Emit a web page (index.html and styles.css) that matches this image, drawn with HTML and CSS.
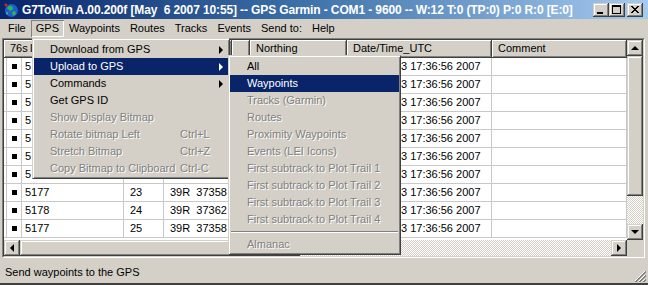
FILE: index.html
```html
<!DOCTYPE html>
<html lang="en">
<head>
    <meta charset="UTF-8">
    <title>G7ToWin</title>
    <link rel="stylesheet" href="styles.css">
</head>
<body>
    <div class="window">
        <div class="titlebar">
            <svg class="app-icon" width="16" height="16" viewBox="0 0 16 16">
                <circle cx="8.5" cy="8.5" r="6.5" fill="#1d5fd0"/>
                <path d="M4 6 Q6 3 9 4 L10 7 L8 9 L6 8 Z" fill="#2fb84a"/>
                <path d="M9 10 L12 9 L13 12 L10 14 Z" fill="#2fb84a"/>
                <path d="M3 10 L5 11 L4 13 Z" fill="#6fd06a"/>
                <circle cx="3" cy="3" r="1.5" fill="#e02020"/>
            </svg>
            <span class="title-text">G7ToWin A.00.200f [May&nbsp; 6 2007 10:55] -- GPS Garmin - COM1 - 9600 -- W:12 T:0 (TP:0) P:0 R:0 [E:0]</span>
            <div class="title-buttons">
                <span class="tbtn">
                    <svg width="16" height="14" viewBox="0 0 16 14"><rect x="4" y="9" width="6" height="2" fill="#000"/></svg>
                </span>
                <span class="tbtn">
                    <svg width="16" height="14" viewBox="0 0 16 14"><rect x="3.5" y="2.5" width="8" height="8" fill="none" stroke="#000"/><rect x="3" y="2" width="9" height="2" fill="#000"/></svg>
                </span>
                <span class="tbtn close">
                    <svg width="16" height="14" viewBox="0 0 16 14"><path d="M4 3 L11 10 M5 3 L12 10 M11 3 L4 10 M12 3 L5 10" stroke="#000" stroke-width="1"/></svg>
                </span>
            </div>
        </div>

        <div class="menubar">
            <span class="mitem">File</span>
            <span class="mitem open">GPS</span>
            <span class="mitem">Waypoints</span>
            <span class="mitem">Routes</span>
            <span class="mitem">Tracks</span>
            <span class="mitem">Events</span>
            <span class="mitem">Send to:</span>
            <span class="mitem">Help</span>
        </div>

        <div class="listview">
            <div class="lv-inner">
                <div class="lv-top">
                    <div class="lv-grid">
                        <div class="lv-head">
                            <span class="hcell first">76s I</span>
                            <span class="hcell"></span>
                            <span class="hcell"></span>
                            <span class="hcell"></span>
                            <span class="hcell">Northing</span>
                            <span class="hcell">Date/Time_UTC</span>
                            <span class="hcell">Comment</span>
                        </div>
                        <div class="lv-row"><span class="cell name"><i class="chk"></i>5</span><span class="cell"></span><span class="cell"></span><span class="cell"></span><span class="cell"></span><span class="cell date">3 17:36:56 2007</span><span class="cell"></span></div>
                        <div class="lv-row"><span class="cell name"><i class="chk"></i>5</span><span class="cell"></span><span class="cell"></span><span class="cell"></span><span class="cell"></span><span class="cell date">3 17:36:56 2007</span><span class="cell"></span></div>
                        <div class="lv-row"><span class="cell name"><i class="chk"></i>5</span><span class="cell"></span><span class="cell"></span><span class="cell"></span><span class="cell"></span><span class="cell date">3 17:36:56 2007</span><span class="cell"></span></div>
                        <div class="lv-row"><span class="cell name"><i class="chk"></i>5</span><span class="cell"></span><span class="cell"></span><span class="cell"></span><span class="cell"></span><span class="cell date">3 17:36:56 2007</span><span class="cell"></span></div>
                        <div class="lv-row"><span class="cell name"><i class="chk"></i>5</span><span class="cell"></span><span class="cell"></span><span class="cell"></span><span class="cell"></span><span class="cell date">3 17:36:56 2007</span><span class="cell"></span></div>
                        <div class="lv-row"><span class="cell name"><i class="chk"></i>5</span><span class="cell"></span><span class="cell"></span><span class="cell"></span><span class="cell"></span><span class="cell date">3 17:36:56 2007</span><span class="cell"></span></div>
                        <div class="lv-row"><span class="cell name"><i class="chk"></i>5</span><span class="cell"></span><span class="cell"></span><span class="cell"></span><span class="cell"></span><span class="cell date">3 17:36:56 2007</span><span class="cell"></span></div>
                        <div class="lv-row"><span class="cell name"><i class="chk"></i>5177</span><span class="cell">23</span><span class="cell utm">39R  37358</span><span class="cell"></span><span class="cell"></span><span class="cell date">3 17:36:56 2007</span><span class="cell"></span></div>
                        <div class="lv-row"><span class="cell name"><i class="chk"></i>5178</span><span class="cell">24</span><span class="cell utm">39R  37362</span><span class="cell"></span><span class="cell"></span><span class="cell date">3 17:36:56 2007</span><span class="cell"></span></div>
                        <div class="lv-row"><span class="cell name"><i class="chk"></i>5177</span><span class="cell">25</span><span class="cell utm">39R  37358</span><span class="cell"></span><span class="cell"></span><span class="cell date">3 17:36:56 2007</span><span class="cell"></span></div>
                    </div>
                    <div class="vscroll">
                        <span class="sbtn"><i class="arrow up"></i></span>
                        <span class="vthumb"></span>
                        <span class="track"></span>
                        <span class="sbtn"><i class="arrow down"></i></span>
                    </div>
                </div>
                <div class="hscroll">
                    <span class="sbtn"><i class="arrow left"></i></span>
                    <span class="hthumb"></span>
                    <span class="track"></span>
                    <span class="sbtn"><i class="arrow right"></i></span>
                    <span class="corner"></span>
                </div>
            </div>
        </div>

        <div class="statusbar">
            <span>Send waypoints to the GPS</span>
            <svg class="grip" width="12" height="12" viewBox="0 0 12 12">
                <path d="M11 1 L1 11 M11 5 L5 11 M11 9 L9 11" stroke="#fff"/>
                <path d="M12 1 L1 12 M12 2 L2 12 M12 5 L5 12 M12 6 L6 12 M12 9 L9 12 M12 10 L10 12" stroke="#808080"/>
            </svg>
        </div>

        <!-- GPS drop-down -->
        <div class="menu menu-gps">
            <div class="mi"><span class="ml">Download from GPS</span><i class="sub"></i></div>
            <div class="mi active"><span class="ml">Upload to GPS</span><i class="sub"></i></div>
            <div class="mi"><span class="ml">Commands</span><i class="sub"></i></div>
            <div class="mi"><span class="ml">Get GPS ID</span></div>
            <div class="mi disabled"><span class="ml">Show Display Bitmap</span></div>
            <div class="mi disabled"><span class="ml">Rotate bitmap Left</span><span class="key">Ctrl+L</span></div>
            <div class="mi disabled"><span class="ml">Stretch Bitmap</span><span class="key">Ctrl+Z</span></div>
            <div class="mi disabled"><span class="ml">Copy Bitmap to Clipboard</span><span class="key">Ctrl-C</span></div>
        </div>

        <!-- Upload to GPS submenu -->
        <div class="menu menu-upload">
            <div class="mi">All</div>
            <div class="mi active">Waypoints</div>
            <div class="mi disabled">Tracks (Garmin)</div>
            <div class="mi disabled">Routes</div>
            <div class="mi disabled">Proximity Waypoints</div>
            <div class="mi disabled">Events (LEI Icons)</div>
            <div class="mi disabled">First subtrack to Plot Trail 1</div>
            <div class="mi disabled">First subtrack to Plot Trail 2</div>
            <div class="mi disabled">First subtrack to Plot Trail 3</div>
            <div class="mi disabled">First subtrack to Plot Trail 4</div>
            <div class="sep"></div>
            <div class="mi disabled">Almanac</div>
        </div>
    </div>
</body>
</html>
```

FILE: styles.css
```css
body {
    margin: 0;
    font-family: "Liberation Sans", Arial, sans-serif;
    font-size: 11px;
    color: #000;
    background-color: #d4d0c8;
}

.window {
    position: relative;
    width: 648px;
    height: 285px;
    box-sizing: border-box;
    background-color: #d4d0c8;
    border-bottom: 2px solid #404040;
    overflow: hidden;
}

/* title bar */
.titlebar {
    height: 19px;
    display: flex;
    align-items: center;
    padding: 0 5px 0 3px;
    background: linear-gradient(90deg, #0a246a, #3a6ea5 45%, #a6caf0);
}

.app-icon {
    flex: none;
    margin-right: 3px;
}

.title-text {
    color: #fff;
    font-weight: bold;
    font-size: 12px;
    letter-spacing: -0.12px;
    white-space: nowrap;
}

.title-buttons {
    margin-left: auto;
    display: flex;
}

.tbtn {
    width: 16px;
    height: 14px;
    background-color: #d4d0c8;
    box-shadow: inset -1px -1px #404040, inset 1px 1px #d4d0c8, inset -2px -2px #808080, inset 2px 2px #fff;
}

.tbtn svg {
    display: block;
}

.tbtn.close {
    margin-left: 2px;
}

/* menu bar */
.menubar {
    height: 19px;
    display: flex;
    align-items: center;
    padding-left: 3px;
}

.mitem {
    padding: 0 5px;
    height: 17px;
    line-height: 17px;
}

.mitem.open {
    box-shadow: inset 1px 1px #808080, inset -1px -1px #fff;
}

/* list view */
.listview {
    margin: 0 3px 0 2px;
    border: 1px solid;
    border-color: #808080 #fff #fff #808080;
}

.lv-inner {
    border: 1px solid;
    border-color: #404040 #d4d0c8 #d4d0c8 #404040;
}

.lv-top {
    display: flex;
    height: 200px;
}

.lv-grid {
    width: 623px;
    background-color: #fff;
    overflow: hidden;
}

.lv-head,
.lv-row {
    display: grid;
    grid-template-columns: 120px 40px 68px 18px 97px 145px 135px;
    height: 18px;
}

.hcell {
    box-sizing: border-box;
    height: 18px;
    line-height: 17px;
    padding-left: 6px;
    background-color: #d4d0c8;
    border-right: 1px solid #404040;
    border-bottom: 1px solid #404040;
    box-shadow: inset 1px 1px #fff, inset -1px -1px #808080;
    white-space: nowrap;
    overflow: hidden;
}

.hcell.first {
    word-spacing: -1px;
}

.cell {
    box-sizing: border-box;
    height: 18px;
    line-height: 17px;
    padding-left: 6px;
    border-right: 1px solid #c8c8c8;
    border-bottom: 1px solid #c8c8c8;
    white-space: nowrap;
    overflow: hidden;
}

.cell.name {
    display: flex;
    padding-left: 2px;
}

.cell.utm {
    white-space: pre;
}

/* date text starts where the submenu ends */
.cell.date {
    padding-left: 54px;
}

.chk {
    width: 14px;
    margin-right: 3px;
    border-left: 1px solid #c8c8c8;
    border-right: 1px solid #c8c8c8;
    display: flex;
    align-items: center;
    justify-content: center;
}

.chk::after {
    content: "";
    width: 5px;
    height: 5px;
    background-color: #000;
}

/* scroll bars */
.sbtn {
    flex: none;
    width: 16px;
    height: 16px;
    display: flex;
    align-items: center;
    justify-content: center;
    background-color: #d4d0c8;
    box-shadow: inset -1px -1px #404040, inset 1px 1px #d4d0c8, inset -2px -2px #808080, inset 2px 2px #fff;
}

.vscroll {
    width: 16px;
    display: flex;
    flex-direction: column;
}

.vthumb {
    height: 140px;
    background-color: #d4d0c8;
    box-shadow: inset -1px -1px #404040, inset 1px 1px #d4d0c8, inset -2px -2px #808080, inset 2px 2px #fff;
}

.track {
    flex: 1;
    background: repeating-conic-gradient(#d4d0c8 0% 25%, #fff 0% 50%) 0 0 / 2px 2px;
}

.hscroll {
    display: flex;
    height: 16px;
}

.hthumb {
    width: 280px;
    background-color: #d4d0c8;
    box-shadow: inset -1px -1px #404040, inset 1px 1px #d4d0c8, inset -2px -2px #808080, inset 2px 2px #fff;
}

.corner {
    width: 16px;
    background-color: #d4d0c8;
}

.arrow {
    width: 0;
    height: 0;
    border: 4px solid transparent;
}

.arrow.up {
    border-top-width: 0;
    border-bottom-color: #000;
}

.arrow.down {
    border-bottom-width: 0;
    border-top-color: #000;
}

.arrow.left {
    border-left-width: 0;
    border-right-color: #000;
}

.arrow.right {
    border-right-width: 0;
    border-left-color: #000;
}

/* status bar */
.statusbar {
    height: 25px;
    display: flex;
    align-items: center;
    padding: 2px 2px 0 5px;
    box-sizing: border-box;
}

.grip {
    margin-left: auto;
    align-self: flex-end;
    margin-bottom: 1px;
}

/* popup menus */
.menu {
    position: absolute;
    box-sizing: border-box;
    padding: 2px 1px 1px 1px;
    background-color: #d4d0c8;
    border: 1px solid;
    border-color: #d4d0c8 #404040 #404040 #d4d0c8;
    box-shadow: inset 1px 1px #fff, inset -1px -1px #808080;
}

.menu-gps {
    left: 32px;
    top: 38px;
    width: 198px;
}

.menu-upload {
    left: 228px;
    top: 55px;
    width: 173px;
}

.mi {
    display: flex;
    align-items: center;
    height: 17px;
    line-height: 17px;
    padding-left: 16px;
    white-space: nowrap;
}

.menu-upload .mi {
    padding-left: 17px;
}

.ml {
    flex: 0 0 130px;
}

.sub {
    margin-left: auto;
    margin-right: 5px;
    width: 0;
    height: 0;
    border-top: 4px solid transparent;
    border-bottom: 4px solid transparent;
    border-left: 4px solid #000;
}

.mi.active {
    background-color: #0a246a;
    color: #fff;
}

.mi.active .sub {
    border-left-color: #fff;
}

.mi.disabled {
    color: #808080;
    text-shadow: 1px 1px 0 #fff;
}

.sep {
    margin: 3px 1px;
    border-top: 1px solid #808080;
    border-bottom: 1px solid #fff;
}
```
